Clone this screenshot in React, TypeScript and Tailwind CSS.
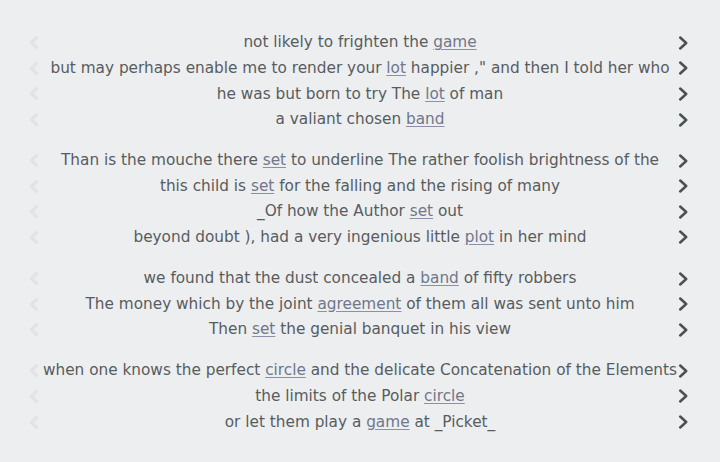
type Seg = string | { link: string };

const groups: Seg[][][] = [
  [
    ["not likely to frighten the ", { link: "game" }],
    ["but may perhaps enable me to render your ", { link: "lot" }, " happier ,\" and then I told her who"],
    ["he was but born to try The ", { link: "lot" }, " of man"],
    ["a valiant chosen ", { link: "band" }],
  ],
  [
    ["Than is the mouche there ", { link: "set" }, " to underline The rather foolish brightness of the"],
    ["this child is ", { link: "set" }, " for the falling and the rising of many"],
    ["_Of how the Author ", { link: "set" }, " out"],
    ["beyond doubt ), had a very ingenious little ", { link: "plot" }, " in her mind"],
  ],
  [
    ["we found that the dust concealed a ", { link: "band" }, " of fifty robbers"],
    ["The money which by the joint ", { link: "agreement" }, " of them all was sent unto him"],
    ["Then ", { link: "set" }, " the genial banquet in his view"],
  ],
  [
    ["when one knows the perfect ", { link: "circle" }, " and the delicate Concatenation of the Elements"],
    ["the limits of the Polar ", { link: "circle" }],
    ["or let them play a ", { link: "game" }, " at _Picket_"],
  ],
];

function Prev() {
  return (
    <svg width="10" height="13" viewBox="0 0 10 13" className="block">
      <path d="M7.5 1.5 L2.5 6.5 L7.5 11.5" fill="none" stroke="#e1e3e5" strokeWidth="3.2" strokeLinecap="round" strokeLinejoin="round" />
    </svg>
  );
}

function Next() {
  return (
    <svg width="11" height="14" viewBox="0 0 11 14" className="block">
      <path d="M2.2 1.5 L8.2 7 L2.2 12.5" fill="none" stroke="#4b5153" strokeWidth="2.5" strokeLinecap="round" strokeLinejoin="round" />
    </svg>
  );
}

function Line({ segs }: { segs: Seg[] }) {
  return (
    <div className="flex items-center h-[25.6px] pl-[29px]">
      <div className="w-[13px] flex justify-start">
        <Prev />
      </div>
      <div className="w-[636px] text-center whitespace-nowrap text-[15.3px] text-[#575c5e]">
        {segs.map((s, i) =>
          typeof s === "string" ? (
            <span key={i}>{s}</span>
          ) : (
            <a key={i} href="#" className="text-[#6f7789] underline decoration-[#8a91a6] underline-offset-2">
              {s.link}
            </a>
          )
        )}
      </div>
      <div className="w-[14px] flex justify-start">
        <Next />
      </div>
    </div>
  );
}

export default function App() {
  return (
    <div className="min-h-[462px] bg-[#edeef0] pt-[30px] font-['DejaVu_Sans',sans-serif]">
      {groups.map((g, gi) => (
        <div key={gi} className="flex flex-col mb-[15.5px]">
          {g.map((segs, i) => (
            <Line key={i} segs={segs} />
          ))}
        </div>
      ))}
    </div>
  );
}
